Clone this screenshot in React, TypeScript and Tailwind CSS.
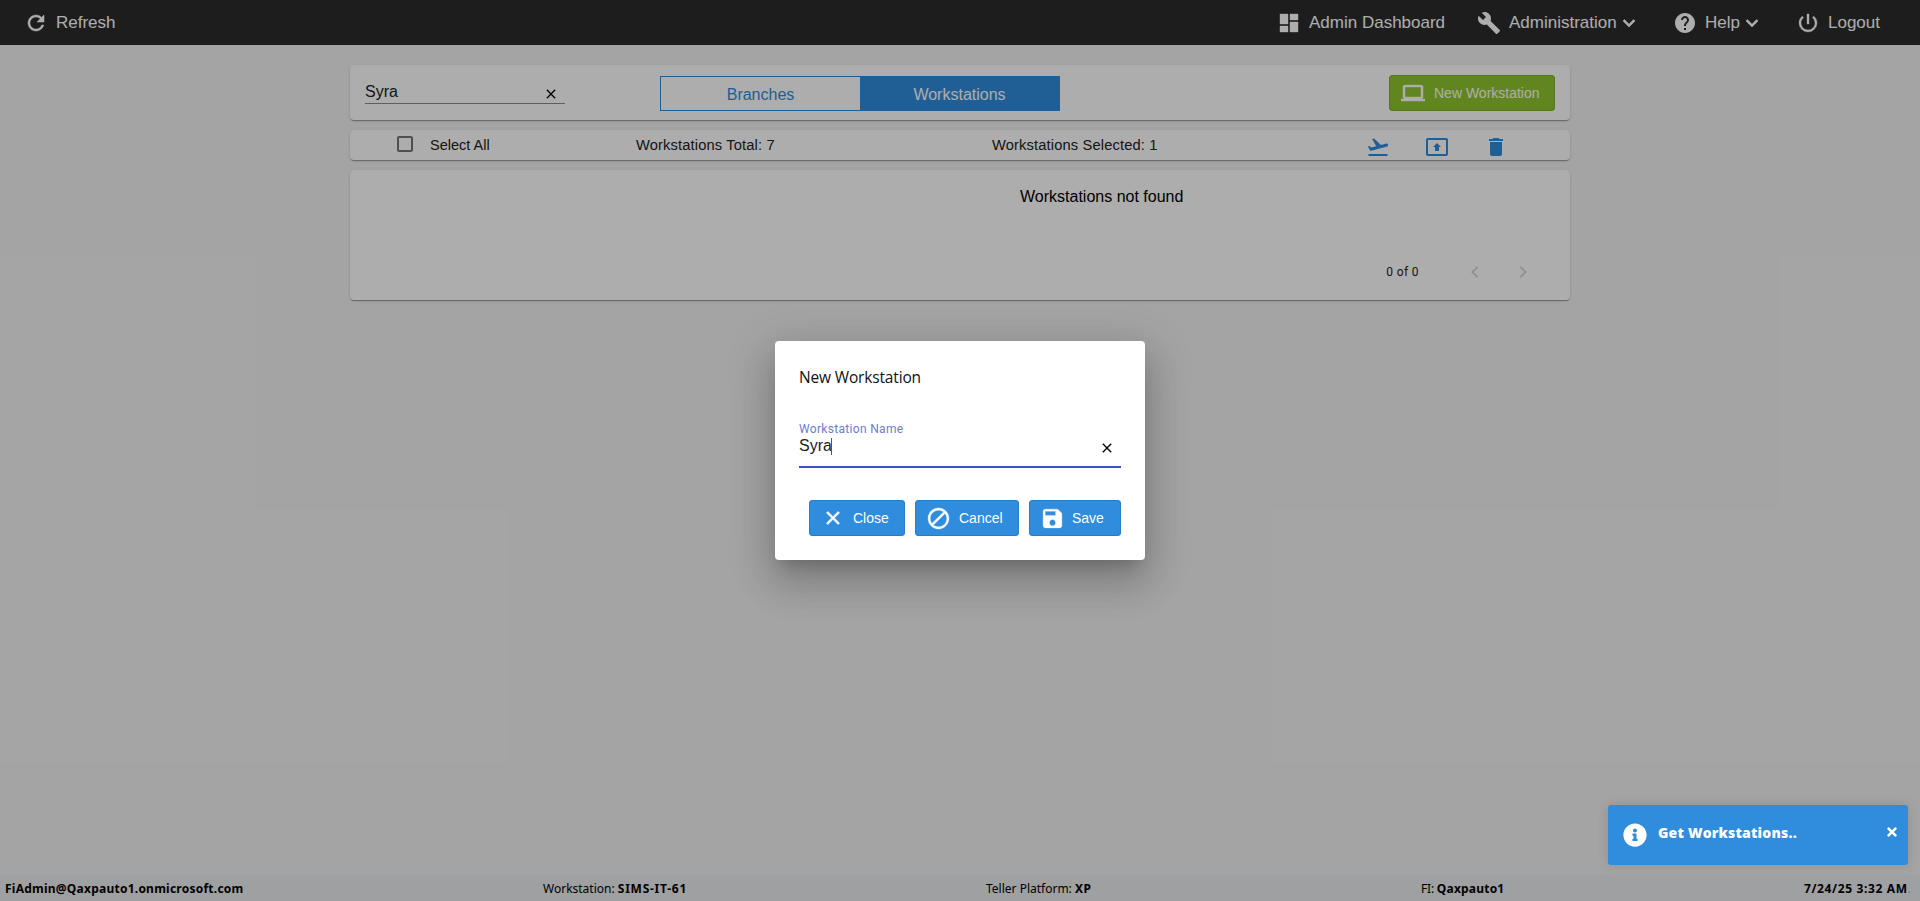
import { ReactNode } from "react";
import {
  MdBlock, MdBuild, MdChevronLeft, MdChevronRight, MdClose, MdDashboard, MdDelete, MdFlightTakeoff,
  MdHelp, MdKeyboardArrowDown, MdLaptop, MdPowerSettingsNew, MdPresentToAll, MdRefresh, MdSave,
} from "react-icons/md";
import { FaInfoCircle, FaTimes } from "react-icons/fa";

const card =
  "rounded-[4px] bg-white shadow-[0_2px_1px_-1px_rgba(0,0,0,0.2),0_1px_1px_0_rgba(0,0,0,0.14),0_1px_3px_0_rgba(0,0,0,0.12)]";

function NavItem({ icon, label, menu, className }: { icon: ReactNode; label: string; menu?: boolean; className: string }) {
  return (
    <div className={`flex items-center text-[24px] ${className}`}>
      {icon}
      <span className="ml-2 text-[17px] leading-6">{label}</span>
      {menu && <MdKeyboardArrowDown className="-mr-1.5 stroke-current stroke-[0.6]" />}
    </div>
  );
}

function Header() {
  return (
    <header className="flex h-[45px] items-start bg-[#2c2c2c] pt-[11px] text-white">
      <NavItem className="pl-6" icon={<MdRefresh className="stroke-current stroke-[0.5]" />} label="Refresh" />
      <div className="flex grow justify-end pr-10">
        <NavItem className="w-[200px]" icon={<MdDashboard className="stroke-current stroke-[0.4]" />} label="Admin Dashboard" />
        <NavItem className="w-[196px]" icon={<MdBuild />} label="Administration" menu />
        <NavItem className="w-[123px]" icon={<MdHelp />} label="Help" menu />
        <NavItem className="w-[84px]" icon={<MdPowerSettingsNew className="stroke-current stroke-[0.4]" />} label="Logout" />
      </div>
    </header>
  );
}

function Toolbar() {
  return (
    <section className={`flex h-[55px] px-[15px] ${card}`}>
      <div className="mt-[16px] flex h-[23px] w-[200px] justify-between border-b border-[#8c8c8c] text-base leading-[22px] text-[#222]">
        <span>Syra</span>
        <MdClose className="mr-[6px] mt-[5px] text-[16px] text-black" />
      </div>
      <div className="ml-[95px] mt-[11px] flex h-[35px] w-[400px] border border-[#308cdc] text-center text-base leading-[36px]">
        <div className="h-[33px] w-1/2 text-[#308cdc]">Branches</div>
        <div className="h-[33px] w-1/2 bg-[#308cdc] text-white">Workstations</div>
      </div>
      <button className="ml-auto mt-[10px] flex h-9 w-[166px] items-center rounded-[3px] border border-[#7eb02a] bg-[#8fc62e] pl-[11px] text-sm text-white">
        <MdLaptop className="stroke-current stroke-[0.4] text-[24px]" />
        <span className="ml-[9px]">New Workstation</span>
      </button>
    </section>
  );
}

function SelectionBar() {
  return (
    <section className={`mt-[10px] flex h-[30px] text-[14.7px] leading-[30px] text-[#222] ${card}`}>
      <span className="ml-[47px] mt-[6px] size-4 rounded-[2px] border-2 border-[#757575]" />
      <span className="ml-[17px] w-[206px] text-[14.5px]">Select All</span>
      <span className="w-[356px] tracking-[0.14px]">Workstations Total: 7</span>
      <span className="tracking-[0.14px]">Workstations Selected: 1</span>
      <div className="ml-auto mr-[62px] mt-[5px] flex text-[24px] text-[#308cdc]">
        <MdFlightTakeoff />
        <MdPresentToAll className="ml-[35px]" />
        <MdDelete className="ml-[35px]" />
      </div>
    </section>
  );
}

function Results() {
  return (
    <section className={`mt-[10px] h-[130px] ${card}`}>
      <p className="pl-[670px] pt-[15px] text-base leading-6 text-black">Workstations not found</p>
      <div className="mt-[51px] flex h-6 items-center justify-end pr-[35px] text-[24px] text-[#d8d8d8]">
        <span className="mr-[44px] font-['Roboto',sans-serif] text-xs tracking-[0.4px] text-[#222]">0 of 0</span>
        <MdChevronLeft />
        <MdChevronRight className="ml-6" />
      </div>
    </section>
  );
}

function Footer() {
  return (
    <footer className="flex h-[26px] bg-[#ebecee] pl-[5px] font-['Noto_Sans',sans-serif] text-[12px] leading-[27px] text-black">
      <b className="w-[538px] tracking-[0.24px]">FiAdmin@Qaxpauto1.onmicrosoft.com</b>
      <span className="w-[443px]">Workstation: <b className="tracking-[0.75px]">SIMS-IT-61</b></span>
      <span className="w-[435px]">Teller Platform: <b className="tracking-[0.5px]">XP</b></span>
      <span className="tracking-[-0.2px]">FI: <b className="tracking-[0.2px]">Qaxpauto1</b></span>
      <span className="ml-auto mr-[9px]"><b className="tracking-[0.65px]">7/24/25 3:32 AM</b><span className="text-[#bbb]">.</span></span>
    </footer>
  );
}

function DialogButton({ icon, label, className }: { icon: ReactNode; label: string; className: string }) {
  return (
    <button className={`flex h-9 items-center rounded-[3px] border border-[#2a7cc4] bg-[#308cdc] text-sm text-white ${className}`}>
      {icon}
      <span>{label}</span>
    </button>
  );
}

function WorkstationDialog() {
  return (
    <div className="h-[219px] w-[370px] rounded-[4px] bg-white px-6 pt-6 shadow-[0_11px_15px_-7px_rgba(0,0,0,0.2),0_24px_38px_3px_rgba(0,0,0,0.14),0_9px_46px_8px_rgba(0,0,0,0.12)]">
      <h2 className="font-['Open_Sans',sans-serif] text-[15.5px] leading-6 tracking-[-0.16px] text-[#111]">New Workstation</h2>
      <div className="mt-[33px] flex h-[46px] flex-col border-b-2 border-[#3f51b5]">
        <label className="font-['Roboto',sans-serif] text-xs leading-[14px] tracking-[0.32px] text-[#6f7bc8]">Workstation Name</label>
        <div className="flex justify-between">
          <span className="flex text-base leading-5 text-[#222]">
            Syra<span className="-ml-px h-[17px] w-px self-center bg-[#3f51b5]" />
          </span>
          <MdClose className="mr-[6px] mt-[4px] text-[16px] text-black" />
        </div>
      </div>
      <div className="mt-[32px] flex justify-end gap-[10px]">
        <DialogButton className="w-24 gap-[9px] pl-[12px]" icon={<MdClose className="stroke-current stroke-[0.8] text-[22px]" />} label="Close" />
        <DialogButton className="w-[104px] gap-[8px] pl-[10px]" icon={<MdBlock className="stroke-current stroke-[0.4] text-[25px]" />} label="Cancel" />
        <DialogButton className="w-[92px] gap-[7px] pl-[10px]" icon={<MdSave className="stroke-current stroke-[0.3] text-[25px]" />} label="Save" />
      </div>
    </div>
  );
}

function Toast() {
  return (
    <div className="absolute bottom-9 right-3 flex h-[60px] w-[300px] items-start rounded-[3px] bg-[#308cdc] pl-[15px] pr-[9px] pt-[18px] text-white shadow-[0_0_12px_rgba(0,0,0,0.12)]">
      <FaInfoCircle className="text-[24px]" />
      <span className="ml-[11px] font-['Open_Sans',sans-serif] text-[14px] font-extrabold leading-5 tracking-[0.2px]">Get Workstations..</span>
      <FaTimes className="ml-auto mt-[2px] text-[14px]" />
    </div>
  );
}

export default function App() {
  return (
    <div className="relative flex h-[901px] flex-col overflow-hidden bg-[#f2f2f2] font-['Liberation_Sans',sans-serif] [&_path[fill=none]]:stroke-none">
      <Header />
      <main className="mx-auto w-[1220px] grow pt-5">
        <Toolbar />
        <SelectionBar />
        <Results />
      </main>
      <Footer />
      <div className="absolute inset-0 flex items-center justify-center bg-black/32">
        <WorkstationDialog />
      </div>
      <Toast />
    </div>
  );
}
